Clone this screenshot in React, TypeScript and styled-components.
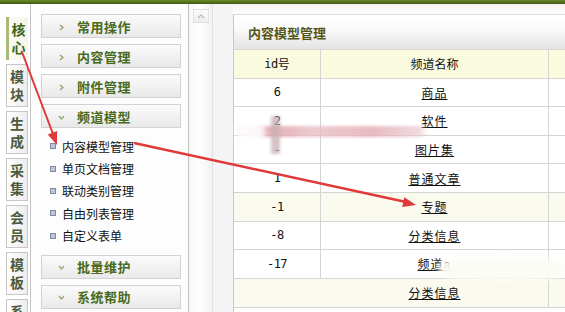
import React from "react";
import styled, { createGlobalStyle, css } from "styled-components";

const Global = createGlobalStyle`
  html, body { margin: 0; padding: 0; background: #fff; }
  body { font-family: "Noto Sans CJK SC", "Noto Sans", sans-serif; }
  * { box-sizing: border-box; }
`;

const Page = styled.div`
  position: relative;
  width: 565px;
  height: 312px;
  overflow: hidden;
  background: #fff;
`;

const TopBar = styled.div`
  height: 4px;
  background: linear-gradient(#6b8a2c, #3d5a12);
`;

const Body = styled.div`
  display: flex;
  height: 308px;
`;

const TabStrip = styled.div`
  width: 31px;
  flex: none;
  border-right: 1px solid #c2c2c2;
  padding: 13px 2px 0 6px;
  display: flex;
  flex-direction: column;
  gap: 4px;
  background: #fff;
`;

const Tab = styled.div<{ $active?: boolean }>`
  height: 43px;
  flex: none;
  display: flex;
  align-items: center;
  justify-content: center;
  font-size: 14px;
  font-weight: 700;
  color: #4c5a40;
  border: 1px solid #c6c6c6;
  background: linear-gradient(90deg, #ffffff, #ededed);
  ${(p) =>
    p.$active &&
    css`
      color: #3c6618;
      border: none;
      border-left: 3px solid #a9b97a;
      background: linear-gradient(90deg, #fbfbf4, #f4f4ea);
    `}
`;

const TabText = styled.span`
  writing-mode: vertical-rl;
  text-orientation: upright;
  letter-spacing: 4px;
  line-height: 16px;
  margin-top: 4px;
`;

const MenuCol = styled.div`
  width: 158px;
  flex: none;
  border-right: 1px solid #c0c0c0;
  padding: 10px 7px 0 10px;
  display: flex;
  flex-direction: column;
  gap: 6px;
  background: #fdfdfd;
`;

const MenuHead = styled.div`
  height: 24px;
  flex: none;
  width: 140px;
  border: 1px solid #d2d2d2;
  background: linear-gradient(#fbfbfb, #e9e9e9);
  display: flex;
  align-items: center;
  padding-left: 16px;
  gap: 12px;
  font-size: 13px;
  font-weight: 700;
  color: #4a6a1c;
  letter-spacing: 0.5px;
`;

const Chevron = styled.svg`
  width: 7px;
  height: 7px;
  flex: none;
  margin-top: 2px;
`;

const SubList = styled.ul`
  list-style: none;
  margin: 0;
  padding: 1px 0 2px 0;
  display: flex;
  flex-direction: column;
`;

const SubItem = styled.li`
  height: 22.4px;
  display: flex;
  align-items: center;
  gap: 6px;
  padding-left: 9px;
  font-size: 12px;
  color: #111;
`;

const Bullet = styled.span`
  width: 6px;
  height: 6px;
  border: 1px solid #7d8aa2;
  background: #bcc6d8;
  flex: none;
`;

const ScrollCol = styled.div`
  width: 24px;
  flex: none;
  border-right: 1px solid #e0e0e0;
  background: linear-gradient(90deg, #f6f6f2, #ffffff 40%, #f2f2f2);
  padding: 5px 3px 0 4px;
`;

const ScrollBtn = styled.div`
  width: 16px;
  height: 14px;
  border: 1px solid #e0e0e0;
  background: linear-gradient(#fbfbfb, #eeeeee);
  display: flex;
  align-items: center;
  justify-content: center;
`;

const Gutter = styled.div`
  width: 20px;
  flex: none;
  background: #f4f4f6;
`;

const Content = styled.div`
  flex: 1;
  padding-top: 10px;
  background: linear-gradient(#f9f1f2, #fdfdfd 10px);
`;

const Panel = styled.div`
  border-left: 1px solid #c8c8c8;
  border-top: 1px solid #dadada;
  height: 100%;
  background: #fff;
`;

const PanelHead = styled.div`
  height: 35px;
  display: flex;
  align-items: center;
  padding-left: 14px;
  font-size: 13px;
  font-weight: 700;
  color: #555515;
  background: linear-gradient(#ffffff, #fafafa 40%, #e4e4e4);
  border-bottom: 1px solid #d8d8d8;
`;

const Row = styled.div<{ $tone?: "head" | "light" | "plain"; $h?: number }>`
  display: grid;
  grid-template-columns: 87px 228px 1fr;
  height: ${(p) => p.$h ?? 28.6}px;
  border-bottom: 1px solid #d4d4d4;
  background: ${(p) =>
    p.$tone === "head" ? "#fafadf" : p.$tone === "light" ? "#fafaef" : "#fff"};
`;

const Cell = styled.div<{ $divider?: boolean }>`
  display: flex;
  align-items: center;
  justify-content: center;
  font-size: 12px;
  color: #111;
  border-right: ${(p) => (p.$divider === false ? "none" : "1px solid #d4d4d4")};
`;

const Num = styled.span`
  font-family: "DejaVu Sans Mono", "Liberation Mono", monospace;
  font-size: 12px;
  letter-spacing: -0.5px;
`;

const Link = styled.a`
  color: #111;
  text-decoration: underline;
  font-size: 12px;
  letter-spacing: 1px;
`;

const Blur = styled.div`
  position: absolute;
  pointer-events: none;
`;

const Overlay = styled.svg`
  position: absolute;
  left: 0;
  top: 0;
  pointer-events: none;
`;

const right = (
  <Chevron viewBox="0 0 7 7">
    <path d="M2 1 L5 3.5 L2 6" fill="none" stroke="#8ea674" strokeWidth="1.3" />
  </Chevron>
);
const down = (
  <Chevron viewBox="0 0 7 7">
    <path d="M1 2 L3.5 5 L6 2" fill="none" stroke="#8ea674" strokeWidth="1.3" />
  </Chevron>
);

function arrowHead(x1: number, y1: number, x2: number, y2: number, len = 12, half = 5) {
  const dx = x2 - x1;
  const dy = y2 - y1;
  const l = Math.hypot(dx, dy);
  const ux = dx / l;
  const uy = dy / l;
  const bx = x2 - ux * len;
  const by = y2 - uy * len;
  const px = -uy * half;
  const py = ux * half;
  return `${x2},${y2} ${bx + px},${by + py} ${bx - px},${by - py}`;
}

const tabs = ["核心", "模块", "生成", "采集", "会员", "模板", "系统"];

const rows: { id: string; name: string; tone?: "light" }[] = [
  { id: "6", name: "商品" },
  { id: "2", name: "软件" },
  { id: "-", name: "图片集" },
  { id: "1", name: "普通文章" },
  { id: "-1", name: "专题", tone: "light" },
  { id: "-8", name: "分类信息" },
  { id: "-17", name: "频道a" },
];

export default function App() {
  return (
    <Page>
      <Global />
      <TopBar />
      <Body>
        <TabStrip>
          {tabs.map((t, i) => (
            <Tab key={i} $active={i === 0}>
              <TabText>{t}</TabText>
            </Tab>
          ))}
        </TabStrip>
        <MenuCol>
          <MenuHead>{right}常用操作</MenuHead>
          <MenuHead>{right}内容管理</MenuHead>
          <MenuHead>{right}附件管理</MenuHead>
          <MenuHead>{down}频道模型</MenuHead>
          <SubList>
            {["内容模型管理", "单页文档管理", "联动类别管理", "自由列表管理", "自定义表单"].map((s) => (
              <SubItem key={s}>
                <Bullet />
                {s}
              </SubItem>
            ))}
          </SubList>
          <MenuHead>{down}批量维护</MenuHead>
          <MenuHead>{down}系统帮助</MenuHead>
        </MenuCol>
        <ScrollCol>
          <ScrollBtn>
            <svg width="8" height="5" viewBox="0 0 8 5">
              <path d="M1 4 L4 1 L7 4" fill="none" stroke="#b8b8b8" strokeWidth="1.2" />
            </svg>
          </ScrollBtn>
        </ScrollCol>
        <Gutter />
        <Content>
          <Panel>
            <PanelHead>内容模型管理</PanelHead>
            <Row $tone="head">
              <Cell>
                <Num>id</Num>号
              </Cell>
              <Cell>频道名称</Cell>
              <Cell $divider={false} />
            </Row>
            {rows.map((r) => (
              <Row key={r.id + r.name} $tone={r.tone}>
                <Cell>
                  <Num>{r.id}</Num>
                </Cell>
                <Cell>
                  <Link>{r.name}</Link>
                </Cell>
                <Cell $divider={false} />
              </Row>
            ))}
            <Row $tone="light" $h={29}>
              <Cell $divider={false} />
              <Cell>
                <Link>分类信息</Link>
              </Cell>
              <Cell $divider={false} />
            </Row>
          </Panel>
        </Content>
      </Body>

      <Blur
        style={{
          left: 238,
          top: 126,
          width: 190,
          height: 11,
          background:
            "linear-gradient(90deg, rgba(230,170,178,0.2), rgba(220,150,160,0.8) 15%, rgba(232,190,196,0.8) 40%, rgba(225,170,178,0.8) 70%, rgba(235,200,205,0.7) 95%, rgba(235,210,210,0))",
          filter: "blur(1.5px)",
        }}
      />
      <Blur
        style={{
          left: 271,
          top: 116,
          width: 9,
          height: 38,
          background: "rgba(200,175,180,0.75)",
          filter: "blur(1.5px)",
        }}
      />
      <Blur
        style={{
          left: 236,
          top: 117,
          width: 30,
          height: 30,
          background: "rgba(255,255,255,0.85)",
          borderRadius: "50%",
          filter: "blur(3px)",
        }}
      />
      <Blur
        style={{
          left: 438,
          top: 256,
          width: 130,
          height: 26,
          background: "rgba(252,252,246,0.95)",
          borderRadius: "40%",
          filter: "blur(3px)",
        }}
      />

      <Overlay width="565" height="312" viewBox="0 0 565 312">
        <line x1="22" y1="52" x2="53" y2="134" stroke="#e0393a" strokeWidth="2" />
        <polygon points={arrowHead(22, 52, 57, 145, 13, 5)} fill="#e0393a" />
        <line x1="134" y1="143" x2="406" y2="202" stroke="#e0393a" strokeWidth="2.4" />
        <polygon points={arrowHead(134, 143, 416, 205, 13, 5)} fill="#e0393a" />
      </Overlay>
    </Page>
  );
}
